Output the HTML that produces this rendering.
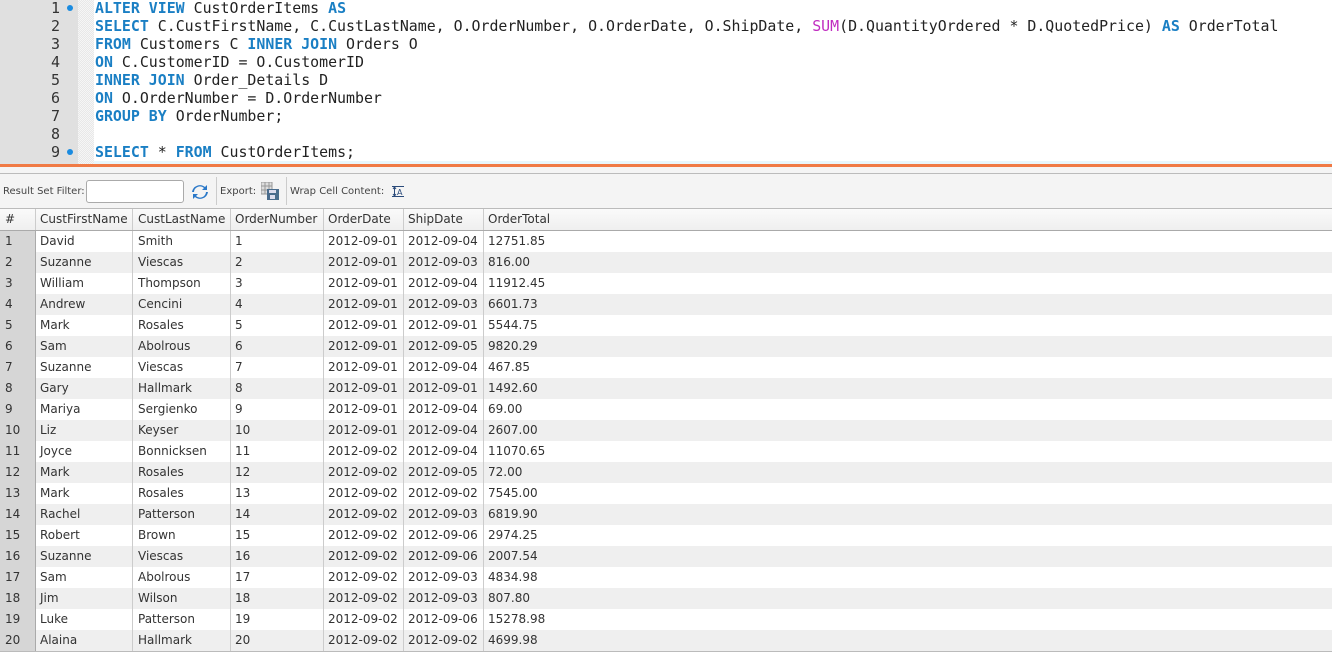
<!DOCTYPE html>
<html><head><meta charset="utf-8"><style>
body{margin:0;width:1332px;height:654px;overflow:hidden;background:#fff;font-family:"DejaVu Sans","Liberation Sans",sans-serif;position:relative}
#ed{position:absolute;left:0;top:0;width:1332px;height:164px;background:#fff}
#gut{position:absolute;left:0;top:0;width:78px;height:164px;background:#e0e0e0}
#chk{position:absolute;left:78px;top:0;width:16px;height:164px;background:repeating-conic-gradient(#e8e8e8 0 25%,#f6f6f6 0 50%) 0 0/2px 2px}
.ln{position:absolute;left:0;width:60px;text-align:right;font:15px "DejaVu Sans Mono",monospace;color:#333}
.dot{position:absolute;left:67px;width:6px;height:6px;border-radius:3px;background:#1a8be0}
.cl{position:absolute;left:95px;font:14.9px "DejaVu Sans Mono",monospace;color:#222;white-space:pre}
.k{color:#1a7fc4;font-weight:bold}.f{color:#c02cc0}
#cur{position:absolute;left:94px;top:161px;width:1238px;height:3px;background:#e8f6fb}
#or{position:absolute;left:0;top:164px;width:1332px;height:3px;background:#f07a45}
#tb{position:absolute;left:0;width:1332px;background:#f4f4f4;border-top:1px solid #bbb;top:173px;height:34px;font-size:10px;color:#444}
#tb span{position:absolute;top:12px;white-space:nowrap}
#hdr{position:absolute;left:0;top:208px;width:1332px;height:23px;background:linear-gradient(#fafafa,#efefef);border-top:1px solid #bbb;border-bottom:1px solid #aaa;box-sizing:border-box}
.c{position:absolute;top:0;height:100%;box-sizing:border-box;border-right:1px solid #ccc;padding-left:5px;font-size:12px;color:#333;line-height:21px;white-space:nowrap}
.row{position:absolute;left:0;width:1332px;height:21px}
</style></head><body>
<div id="ed"><div id="gut"></div><div id="chk"></div>
<div class="ln" style="top:-1px">1</div><div class="dot" style="top:5px"></div>
<div class="ln" style="top:17px">2</div><div class="ln" style="top:35px">3</div><div class="ln" style="top:53px">4</div><div class="ln" style="top:71px">5</div><div class="ln" style="top:89px">6</div><div class="ln" style="top:107px">7</div><div class="ln" style="top:125px">8</div><div class="ln" style="top:143px">9</div><div class="dot" style="top:149px"></div>
<div class="cl" style="top:-1px"><span class="k">ALTER VIEW</span> CustOrderItems <span class="k">AS</span></div>
<div class="cl" style="top:17px"><span class="k">SELECT</span> C.CustFirstName, C.CustLastName, O.OrderNumber, O.OrderDate, O.ShipDate, <span class="f">SUM</span>(D.QuantityOrdered * D.QuotedPrice) <span class="k">AS</span> OrderTotal</div>
<div class="cl" style="top:35px"><span class="k">FROM</span> Customers C <span class="k">INNER JOIN</span> Orders O</div>
<div class="cl" style="top:53px"><span class="k">ON</span> C.CustomerID = O.CustomerID</div>
<div class="cl" style="top:71px"><span class="k">INNER JOIN</span> Order_Details D</div>
<div class="cl" style="top:89px"><span class="k">ON</span> O.OrderNumber = D.OrderNumber</div>
<div class="cl" style="top:107px"><span class="k">GROUP BY</span> OrderNumber;</div>
<div class="cl" style="top:143px"><span class="k">SELECT</span> * <span class="k">FROM</span> CustOrderItems;</div>
<div id="cur"></div></div>
<div id="or"></div>
<div style="position:absolute;left:0;top:167px;width:1332px;height:6px;background:#f4f4f4"></div>
<div id="tb">
<span style="left:3px">Result Set Filter:</span>
<div style="position:absolute;left:86px;top:6px;width:96px;height:21px;background:#fff;border:1px solid #aaa;border-radius:3px"></div>
<svg style="position:absolute;left:192px;top:11px" width="16" height="14" viewBox="0 0 16 14"><path d="M2 7a6 6 0 0 1 10-4l-2 2h5V0l-2 2A8 8 0 0 0 0 7z" fill="#2a78c8"/><path d="M14 7a6 6 0 0 1-10 4l2-2H1v5l2-2a8 8 0 0 0 13-5z" fill="#2a78c8"/></svg>
<div style="position:absolute;left:216px;top:3px;width:1px;height:28px;background:#ccc"></div>
<span style="left:220px">Export:</span>
<svg style="position:absolute;left:261px;top:8px" width="18" height="18" viewBox="0 0 18 18"><rect x="0" y="0" width="11" height="12" fill="#ddd" stroke="#999"/><path d="M0 4h11M0 8h11M4 0v12M8 0v12" stroke="#999"/><rect x="6" y="7" width="12" height="11" fill="#4a6c8c"/><rect x="8" y="8" width="7" height="3" fill="#dde"/><rect x="9" y="13" width="5" height="4" fill="#dde"/></svg>
<div style="position:absolute;left:286px;top:3px;width:1px;height:28px;background:#ccc"></div>
<span style="left:290px">Wrap Cell Content:</span>
<svg style="position:absolute;left:392px;top:12px" width="12" height="11" viewBox="0 0 12 11"><path d="M0 .5h12M0 10.5h12M2.5 1v9M1 3l1.5-2 1.5 2M1 8l1.5 2 1.5-2" stroke="#2a4a7a" fill="none"/><text x="5" y="9" font-size="8" fill="#2a4a7a" font-family="DejaVu Sans">A</text></svg>
</div>
<div id="hdr">
<div class="c" style="left:0;width:36px">#</div><div class="c" style="left:35px;width:98px">CustFirstName</div><div class="c" style="left:133px;width:98px">CustLastName</div><div class="c" style="left:230px;width:94px">OrderNumber</div><div class="c" style="left:323px;width:81px">OrderDate</div><div class="c" style="left:403px;width:81px">ShipDate</div><div class="c" style="left:483px;width:200px;border:0">OrderTotal</div>
</div>
<div id="rows"></div>
<script>
var d=[["David","Smith","2012-09-01","2012-09-04","12751.85"],["Suzanne","Viescas","2012-09-01","2012-09-03","816.00"],["William","Thompson","2012-09-01","2012-09-04","11912.45"],["Andrew","Cencini","2012-09-01","2012-09-03","6601.73"],["Mark","Rosales","2012-09-01","2012-09-01","5544.75"],["Sam","Abolrous","2012-09-01","2012-09-05","9820.29"],["Suzanne","Viescas","2012-09-01","2012-09-04","467.85"],["Gary","Hallmark","2012-09-01","2012-09-01","1492.60"],["Mariya","Sergienko","2012-09-01","2012-09-04","69.00"],["Liz","Keyser","2012-09-01","2012-09-04","2607.00"],["Joyce","Bonnicksen","2012-09-02","2012-09-04","11070.65"],["Mark","Rosales","2012-09-02","2012-09-05","72.00"],["Mark","Rosales","2012-09-02","2012-09-02","7545.00"],["Rachel","Patterson","2012-09-02","2012-09-03","6819.90"],["Robert","Brown","2012-09-02","2012-09-06","2974.25"],["Suzanne","Viescas","2012-09-02","2012-09-06","2007.54"],["Sam","Abolrous","2012-09-02","2012-09-03","4834.98"],["Jim","Wilson","2012-09-02","2012-09-03","807.80"],["Luke","Patterson","2012-09-02","2012-09-06","15278.98"],["Alaina","Hallmark","2012-09-02","2012-09-02","4699.98"]];
var h="";d.forEach(function(r,i){var t=231+i*21,bg=i%2?"#efefef":"#fff";
h+='<div class="row" style="top:'+t+'px;background:'+bg+'"><div class="c" style="left:0;width:36px;background:#d6d6d6;border-right:1px solid #aaa">'+(i+1)+'</div><div class="c" style="left:35px;width:98px">'+r[0]+'</div><div class="c" style="left:133px;width:98px">'+r[1]+'</div><div class="c" style="left:230px;width:94px">'+(i+1)+'</div><div class="c" style="left:323px;width:81px">'+r[2]+'</div><div class="c" style="left:403px;width:81px">'+r[3]+'</div><div class="c" style="left:483px;width:200px;border:0">'+r[4]+'</div></div>';});
h+='<div style="position:absolute;left:0;top:651px;width:1332px;height:1px;background:#bbb"></div>';
document.getElementById("rows").innerHTML=h;
</script>
</body></html>
